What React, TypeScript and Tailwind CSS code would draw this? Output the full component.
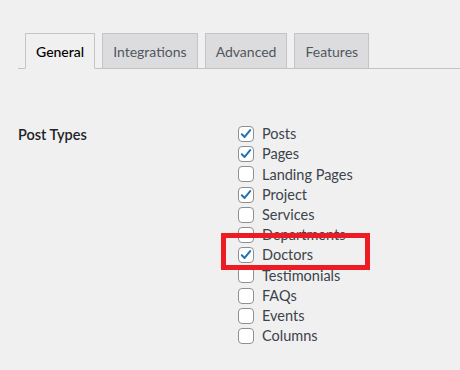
const tabs = ["General", "Integrations", "Advanced", "Features"];

const postTypes: { label: string; checked: boolean }[] = [
  { label: "Posts", checked: true },
  { label: "Pages", checked: true },
  { label: "Landing Pages", checked: false },
  { label: "Project", checked: true },
  { label: "Services", checked: false },
  { label: "Departments", checked: false },
  { label: "Doctors", checked: true },
  { label: "Testimonials", checked: false },
  { label: "FAQs", checked: false },
  { label: "Events", checked: false },
  { label: "Columns", checked: false },
];

function Checkbox({ checked }: { checked: boolean }) {
  return (
    <span className="w-4 h-4 rounded-[4px] border border-[#8c8f94] bg-white flex items-center justify-center shrink-0">
      {checked && (
        <svg viewBox="0 0 16 16" className="w-[14px] h-[14px]">
          <path
            d="M3.2 8.3 L6.4 11.4 L12.8 3.6"
            fill="none"
            stroke="#2271b1"
            strokeWidth="2.3"
            strokeLinecap="round"
            strokeLinejoin="round"
          />
        </svg>
      )}
    </span>
  );
}

export default function App() {
  return (
    <div
      className="w-[460px] h-[370px] bg-[#f0f0f1] overflow-hidden text-[14.5px]"
      style={{ fontFamily: 'Lato, "Noto Sans", sans-serif' }}
    >
      {/* tabs */}
      <div className="pt-[33px] pl-[18px]">
        <div className="flex items-end gap-[7px] pl-[7px] border-b border-[#c3c4c7] h-[36px]">
          {tabs.map((t, i) => (
            <div
              key={t}
              className={`h-[36px] -mb-px px-[10px] text-[14px] flex items-center border border-[#c3c4c7] ${
                i === 0
                  ? "bg-[#f0f0f1] border-b-[#f0f0f1] text-[#000] font-medium"
                  : "bg-[#dcdcde] text-[#50575e]"
              }`}
            >
              {t}
            </div>
          ))}
        </div>
      </div>

      {/* settings row */}
      <div className="flex pl-[18px] pt-[56px]">
        <div className="w-[220px] font-semibold text-[#1d2327] leading-5">
          Post Types
        </div>
        <div className="flex flex-col -mt-[1px] relative">
          {postTypes.map((p) => (
            <label
              key={p.label}
              className="h-[20.2px] flex items-center gap-[8px] text-[#3c434a]"
            >
              <Checkbox checked={p.checked} />
              <span>{p.label}</span>
            </label>
          ))}
          {/* highlight annotation */}
          <div className="absolute left-[-17px] top-[109px] w-[149px] h-[37px] border-[5px] border-[#ed1c24]" />
        </div>
      </div>
    </div>
  );
}
